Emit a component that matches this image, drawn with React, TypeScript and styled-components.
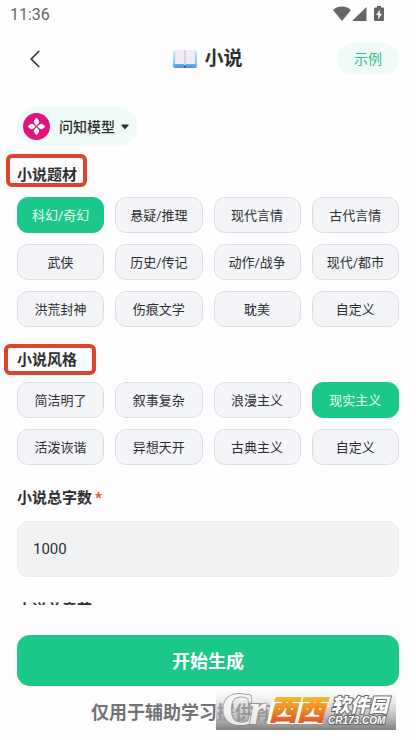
import React, { useState } from "react";
import styled, { createGlobalStyle } from "styled-components";

const sans = `Roboto, "Noto Sans CJK SC", sans-serif`;
const green = "#1bc889";
const ink = "#2e2f31";

const GlobalStyle = createGlobalStyle`
  *, *::before, *::after { box-sizing: border-box; }
  body { margin: 0; background: #fefefe; color: ${ink}; font-family: ${sans}; }
  button, input { font-family: inherit; color: inherit; margin: 0; }
  button { border: 0; padding: 0 0 2px; cursor: pointer; }
`;

const Screen = styled.div`
  display: flex;
  flex-direction: column;
  height: 100vh;
  overflow: hidden;
`;

const StatusBar = styled.div`
  display: flex;
  justify-content: space-between;
  height: 30px;
  padding: 0 31px 0 10px;
  font-size: 16px;
  line-height: 30px;
  color: #666;
`;

const StatusIcons = styled.div`
  display: flex;
  align-items: flex-start;
  padding-top: 6px;
`;

const Header = styled.header`
  display: grid;
  grid-template-columns: 1fr auto 1fr;
  align-items: center;
  height: 58px;
  padding: 0 17px;
`;

const BackButton = styled.button`
  display: flex;
  align-items: center;
  justify-content: center;
  justify-self: start;
  width: 36px;
  height: 36px;
  padding: 0;
  background: none;
`;

const Title = styled.h1`
  display: flex;
  align-items: center;
  gap: 7px;
  margin: 0;
  font-size: 19px;
  line-height: 28px;
  font-weight: 700;
`;

const ExampleButton = styled.button`
  justify-self: end;
  height: 32px;
  padding: 0 17px 2px;
  border-radius: 16px;
  background: #f0faf6;
  color: #2fbd88;
  font-size: 14px;
`;

const Content = styled.main`
  flex: 1;
  min-height: 0;
  overflow: hidden;
  display: flex;
  flex-direction: column;
  padding: 19px 17px 0;
`;

const ModelButton = styled.button`
  display: flex;
  align-items: center;
  align-self: flex-start;
  flex-shrink: 0;
  height: 39px;
  margin-bottom: 16px;
  padding: 0 9px 0 6px;
  border-radius: 20px;
  background: #f0faf6;
  font-size: 14px;
  font-weight: 500;
`;

const ModelName = styled.span`
  margin: 0 6px 0 9px;
  padding-bottom: 2px;
`;

const Form = styled.form`
  display: flex;
  flex-direction: column;
  gap: 20px;
`;

const Section = styled.section`
  display: flex;
  flex-direction: column;
  gap: 9px;
`;

const Field = styled.div`
  display: flex;
  flex-direction: column;
  gap: 10px;
`;

const Heading = styled.h2`
  position: relative;
  align-self: flex-start;
  margin: 0;
  font-size: 15px;
  line-height: 26px;
  font-weight: 700;
`;

const FieldLabel = styled.label`
  font-size: 15px;
  line-height: 26px;
  font-weight: 700;
`;

const Required = styled.span`
  margin-left: 3px;
  color: #e8472f;
`;

const Marker = styled.span<{ $inset: string }>`
  position: absolute;
  inset: ${(p) => p.$inset};
  border: 4px solid #dc452d;
  border-radius: 6px;
  pointer-events: none;
`;

const ChipGrid = styled.div`
  display: grid;
  grid-template-columns: repeat(4, 1fr);
  gap: 11px;
`;

const Chip = styled.button<{ $active: boolean }>`
  height: 36px;
  border: 1px solid ${(p) => (p.$active ? green : "#dcdfe1")};
  border-radius: 11px;
  background: ${(p) => (p.$active ? green : "#f4f5f8")};
  color: ${(p) => (p.$active ? "#e9fff6" : ink)};
  font-size: 13px;
  white-space: nowrap;
`;

const TextInput = styled.input`
  width: 100%;
  height: 56px;
  padding: 0 15px;
  border: 1px solid #e8eaed;
  border-radius: 11px;
  background: #f1f2f4;
  font-size: 15px;
  outline: none;
`;

const Footer = styled.footer`
  position: relative;
  display: flex;
  flex-direction: column;
  gap: 15px;
  padding: 30px 17px 15px;
`;

const SubmitButton = styled.button`
  height: 51px;
  border-radius: 13px;
  background: ${green};
  color: #fff;
  font-size: 18px;
  font-weight: 700;
`;

const Note = styled.p`
  margin: 0;
  text-align: center;
  font-size: 18px;
  line-height: 24px;
  font-weight: 700;
  color: #727375;
`;

const Watermark = styled.svg`
  position: absolute;
  right: 20px;
  bottom: 10px;
`;

const genres = [
  "科幻/奇幻", "悬疑/推理", "现代言情", "古代言情",
  "武侠", "历史/传记", "动作/战争", "现代/都市",
  "洪荒封神", "伤痕文学", "耽美", "自定义",
];

const styles = [
  "简洁明了", "叙事复杂", "浪漫主义", "现实主义",
  "活泼诙谐", "异想天开", "古典主义", "自定义",
];

function BookIcon() {
  return (
    <svg width="24" height="20" viewBox="0 0 24 20" aria-hidden="true">
      <defs>
        <linearGradient id="cover" x1="0" y1="0" x2="0" y2="1">
          <stop offset="0" stopColor="#c6e9f3" />
          <stop offset="0.7" stopColor="#8ccaf0" />
          <stop offset="1" stopColor="#4a8fdc" />
        </linearGradient>
      </defs>
      <path d="M2 1.500h20a2 2 0 0 1 2 2V17a2 2 0 0 1-2 2H2a2 2 0 0 1-2-2V3.500a2 2 0 0 1 2-2z" fill="url(#cover)" />
      <path d="M2 15.500h20v1.200H2z" fill="#5b9fe4" />
      <path d="M2.200 1h8.600q1.200 0 1.200 1 0-1 1.200-1h8.600v14h-8.600q-1.200 0-1.200 1 0-1-1.200-1H2.200z" fill="#f1ebf8" />
      <path d="M11 1.300h2V16h-2z" fill="#ddd3e9" />
      <path d="M11 16.500h2v2.500h-2z" fill="#2b64b4" />
    </svg>
  );
}

function ModelIcon() {
  return (
    <svg width="27" height="27" viewBox="0 0 27 27" aria-hidden="true">
      <circle cx="13.500" cy="13.500" r="13.500" fill="#e6117d" />
      <g fill="#fff">
        {[0, 90, 180, 270].map((a) => (
          <path
            key={a}
            transform={`rotate(${a} 13.5 13.5)`}
            d="M13.500 4.700C15 6.200 16.200 7.500 16.200 8.900c0 1.400-1.500 2.200-2.700 3.800-1.200-1.600-2.700-2.400-2.700-3.800 0-1.400 1.200-2.700 2.700-4.200z"
          />
        ))}
      </g>
    </svg>
  );
}

function SiteMark() {
  return (
    <Watermark width="180" height="40" viewBox="0 0 180 40" role="img" aria-label="西西软件园">
      <defs>
        <linearGradient id="shade" x1="0" y1="0" x2="0" y2="1">
          <stop offset="0" stopColor="#e8e8e8" stopOpacity="0.1" />
          <stop offset="0.5" stopColor="#b5b5b5" stopOpacity="0.6" />
          <stop offset="1" stopColor="#808080" />
        </linearGradient>
        <linearGradient id="orange" gradientUnits="userSpaceOnUse" x1="0" y1="8" x2="0" y2="34">
          <stop offset="0" stopColor="#f6b52c" />
          <stop offset="1" stopColor="#e2501f" />
        </linearGradient>
        <linearGradient id="silver" x1="0" y1="0" x2="0" y2="1">
          <stop offset="0" stopColor="#fff" />
          <stop offset="1" stopColor="#e2e2e2" />
        </linearGradient>
      </defs>
      <rect width="180" height="40" fill="url(#shade)" />
      <g fontFamily="Liberation Serif, serif" fontWeight="700" fill="url(#silver)" stroke="#888" strokeWidth="1.500" paintOrder="stroke">
        <text x="5" y="35" fontSize="47">C</text>
        <text x="33" y="34" fontSize="44" fontStyle="italic">r</text>
      </g>
      <path d="M58 7h54l-6 26H52z" fill="#fff" stroke="#fff" strokeWidth="2" strokeLinejoin="round" />
      <g fontFamily="Noto Sans CJK SC, sans-serif" fontWeight="900" fontStyle="italic" paintOrder="stroke">
        <text x="53" y="30" fontSize="28" fill="url(#orange)" stroke="url(#orange)" strokeWidth="1">西西</text>
        <text x="115" y="22" fontSize="19" fill="#fff" stroke="#666" strokeWidth="2">软件园</text>
      </g>
      <text x="112" y="34" fontFamily="Liberation Sans, sans-serif" fontSize="10" fontWeight="700" fontStyle="italic" fill="#fff" stroke="#666" strokeWidth="2" paintOrder="stroke">
        CR173.COM
      </text>
    </Watermark>
  );
}

interface ChipsProps {
  label: string;
  options: string[];
  initial: string;
}

function Chips({ label, options, initial }: ChipsProps) {
  const [value, setValue] = useState(initial);
  return (
    <ChipGrid role="group" aria-label={label}>
      {options.map((o) => (
        <Chip key={o} type="button" $active={o === value} aria-pressed={o === value} onClick={() => setValue(o)}>
          {o}
        </Chip>
      ))}
    </ChipGrid>
  );
}

export default function App() {
  return (
    <>
      <GlobalStyle />
      <Screen>
        <StatusBar>
          <span>11:36</span>
          <StatusIcons>
            <svg width="52" height="16" viewBox="0 0 52 16" fill="#666" aria-hidden="true">
              <path d="M0 4C5-.6 13-.6 18 4L9 15z" />
              <path d="M33.500 1v14H19z" />
              <path d="M44 0h4v1.500h2q1 0 1 1v11.500q0 1-1 1h-8q-1 0-1-1v-11.500q0-1 1-1h2z" />
              <path d="M46.800 3.500L43.200 9h2.100v4.200L49 7.700h-2.200z" fill="#fff" />
            </svg>
          </StatusIcons>
        </StatusBar>
        <Header>
          <BackButton aria-label="返回">
            <svg width="10" height="18" viewBox="0 0 10 18" fill="none" stroke={ink} strokeWidth="1.600" aria-hidden="true">
              <path d="M9.200 1L1.200 9l8 8" />
            </svg>
          </BackButton>
          <Title>
            <BookIcon />
            小说
          </Title>
          <ExampleButton>示例</ExampleButton>
        </Header>
        <Content>
          <ModelButton aria-haspopup="listbox">
            <ModelIcon />
            <ModelName>问知模型</ModelName>
            <svg width="8" height="6" viewBox="0 0 8 6" aria-hidden="true">
              <path d="M.8.500h6.400q.8 0 .4.700L4.500 5q-.5.600-1 0L.4 1.200Q0 .500.8.500z" fill={ink} />
            </svg>
          </ModelButton>
          <Form id="novel" onSubmit={(e) => e.preventDefault()}>
            <Section>
              <Heading>
                小说题材
                <Marker $inset="-8px -10px 1px -11px" />
              </Heading>
              <Chips label="小说题材" options={genres} initial="科幻/奇幻" />
            </Section>
            <Section>
              <Heading>
                小说风格
                <Marker $inset="-3px -19px -2px -13px" />
              </Heading>
              <Chips label="小说风格" options={styles} initial="现实主义" />
            </Section>
            <Field>
              <FieldLabel htmlFor="words">
                小说总字数<Required>*</Required>
              </FieldLabel>
              <TextInput id="words" inputMode="numeric" defaultValue="1000" />
            </Field>
            <Field>
              <FieldLabel htmlFor="chapters">小说总章节</FieldLabel>
              <TextInput id="chapters" inputMode="numeric" />
            </Field>
          </Form>
        </Content>
        <Footer>
          <SubmitButton type="submit" form="novel">开始生成</SubmitButton>
          <Note>仅用于辅助学习提供有限建议</Note>
          <SiteMark />
        </Footer>
      </Screen>
    </>
  );
}
